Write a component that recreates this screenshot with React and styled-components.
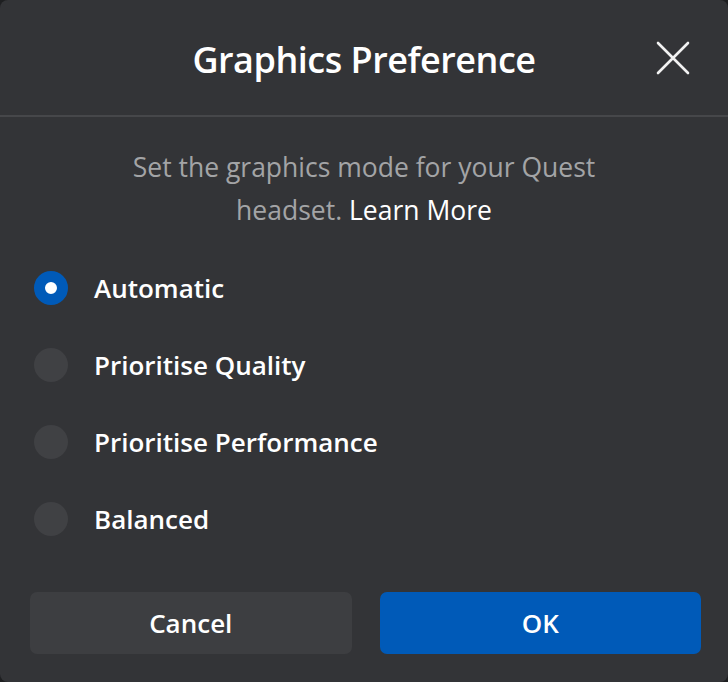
import React, { useState } from "react";
import styled, { createGlobalStyle } from "styled-components";

const GlobalStyle = createGlobalStyle`
  html, body {
    margin: 0;
    padding: 0;
    background: #1e1f21;
  }
  * { box-sizing: border-box; }
`;

const options = [
  "Automatic",
  "Prioritise Quality",
  "Prioritise Performance",
  "Balanced",
];

const CloseIcon = () => (
  <svg width="34" height="34" viewBox="0 0 34 34" fill="none">
    <path d="M2 2 L32 32 M32 2 L2 32" stroke="#f2f2f2" strokeWidth="2.6" strokeLinecap="round" />
  </svg>
);

const App = () => {
  const [mode, setMode] = useState("Automatic");

  return (
    <>
      <GlobalStyle />
      <Dialog>
        <Header>
          <span />
          <Title>Graphics Preference</Title>
          <CloseButton aria-label="Close">
            <CloseIcon />
          </CloseButton>
        </Header>

        <Description>
          Set the graphics mode for your Quest headset.{" "}
          <LearnMore href="#">Learn More</LearnMore>
        </Description>

        <OptionList>
          {options.map((opt) => (
            <Option key={opt} onClick={() => setMode(opt)}>
              <Radio $checked={mode === opt} />
              <Label>{opt}</Label>
            </Option>
          ))}
        </OptionList>

        <Footer>
          <Button>Cancel</Button>
          <Button $primary>OK</Button>
        </Footer>
      </Dialog>
    </>
  );
};

const Dialog = styled.div`
  width: 728px;
  height: 682px;
  background: #333437;
  border-radius: 8px;
  display: flex;
  flex-direction: column;
  font-family: "Open Sans", "Noto Sans", sans-serif;
  color: #ffffff;
  overflow: hidden;
`;

const Header = styled.div`
  height: 117px;
  padding-top: 3px;
  display: grid;
  grid-template-columns: 1fr auto 1fr;
  align-items: center;
  border-bottom: 2px solid #46474a;
`;

const Title = styled.h1`
  margin: 0;
  font-size: 36px;
  font-weight: 600;
  letter-spacing: -0.5px;
  color: #ffffff;
`;

const CloseButton = styled.button`
  justify-self: end;
  margin-right: 38px;
  margin-bottom: 3px;
  background: transparent;
  border: none;
  padding: 0;
  display: flex;
  cursor: pointer;
`;

const Description = styled.p`
  margin: 29px 110px 0;
  text-align: center;
  font-size: 26.5px;
  line-height: 43px;
  color: #a3a4a6;
`;

const LearnMore = styled.a`
  color: #ffffff;
  text-decoration: none;
`;

const OptionList = styled.div`
  display: flex;
  flex-direction: column;
  padding: 17px 34px 0;
`;

const Option = styled.label`
  display: flex;
  align-items: center;
  gap: 26px;
  height: 77px;
  cursor: pointer;
`;

const Radio = styled.span`
  width: 34px;
  height: 34px;
  border-radius: 50%;
  flex-shrink: 0;
  background: ${(p) => (p.$checked ? "#ffffff" : "#404144")};
  border: ${(p) => (p.$checked ? "11px solid #005ab8" : "none")};
`;

const Label = styled.span`
  font-size: 26px;
  font-weight: 600;
  color: #ffffff;
`;

const Footer = styled.div`
  margin-top: auto;
  display: grid;
  grid-template-columns: 1fr 1fr;
  gap: 28px;
  padding: 0 27px 28px 30px;
`;

const Button = styled.button`
  height: 62px;
  border: none;
  border-radius: 7px;
  background: ${(p) => (p.$primary ? "#005ab8" : "#3d3e41")};
  color: #ffffff;
  font-family: inherit;
  font-size: 26px;
  font-weight: 600;
  cursor: pointer;
`;

export default App;
